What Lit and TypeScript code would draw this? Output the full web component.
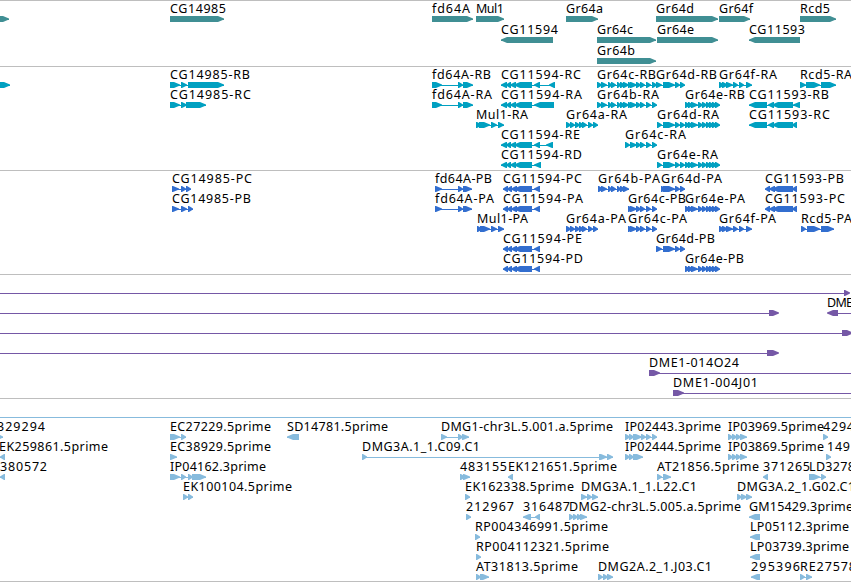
import { LitElement, html, css, svg } from 'lit'
import { customElement, property } from 'lit/decorators.js'

type Block = [number, number]

interface Feature {
	/** Label text, empty when it lies outside the view */
	name: string
	/** Left and right edge of the label */
	span: [number, number]
	blocks: Block[]
	reverse?: boolean
	/** Spliced line drawn past the first or last block */
	line?: [number, number]
}

interface Track {
	kind: string
	lanes: Feature[][]
}

const fwd = (name: string, from: number, to: number, ...blocks: Block[]): Feature => ({
	name,
	span: [from, to],
	blocks,
})

const rev = (name: string, from: number, to: number, ...blocks: Block[]): Feature => ({
	name,
	span: [from, to],
	blocks,
	reverse: true,
})

// Exons that several transcripts share
const fd64a: Block[] = [[432, 442], [458, 463], [463, 473]]
const fd64aCds: Block[] = [[435, 442], [458, 463], [463, 472]]
const cg11594: Block[] = [[501, 507], [506, 511], [510, 516], [514, 532]]
const cg11594Cds: Block[] = [[503, 508], [507, 512], [511, 517], [514, 532], [534, 540]]
const cg11593: Block[] = [[749, 767], [768, 774], [772, 793]]
const cg11593Cds: Block[] = [[765, 770], [769, 775], [772, 793], [792, 797]]
const gr64a: Block[] = [[566, 571], [570, 575], [575, 580], [579, 584], [582, 587], [588, 593], [593, 598]]
const gr64b: Block[] = [[597, 602], [601, 607], [608, 612], [611, 616], [617, 621], [620, 625], [623, 629]]
const gr64c: Block[] = [[628, 633], [630, 637], [636, 641], [640, 645], [646, 651], [652, 657]]
const gr64d: Block[] = [[656, 662], [663, 675], [675, 680], [680, 685]]
const gr64e: Block[] = [[685, 690], [688, 693], [691, 698], [698, 703], [702, 707], [706, 711], [709, 714], [712, 717], [715, 720]]
const gr64f: Block[] = [[719, 724], [722, 728], [726, 733], [733, 738], [739, 744], [746, 752]]

const TRACKS: Track[] = [
	{
		kind: 'gene',
		lanes: [
			[
				fwd('', 0, 0, [-10, 9]),
				fwd('CG14985', 170, 226, [170, 224]),
				fwd('fd64A', 432, 470, [432, 473]),
				fwd('Mul1', 476, 504, [476, 504]),
				fwd('Gr64a', 566, 603, [566, 598]),
				fwd('Gr64d', 656, 694, [656, 718]),
				fwd('Gr64f', 719, 753, [719, 750]),
				fwd('Rcd5', 800, 830, [800, 836]),
			],
			[
				rev('CG11594', 501, 558, [501, 553]),
				fwd('Gr64c', 597, 633, [597, 656]),
				fwd('Gr64e', 657, 694, [657, 718]),
				rev('CG11593', 749, 805, [749, 800]),
			],
			[fwd('Gr64b', 597, 635, [597, 656])],
		],
	},
	{
		kind: 'transcript',
		lanes: [
			[
				fwd('', 0, 0, [-10, 10]),
				fwd('CG14985-RB', 170, 250, [170, 180], [181, 187], [188, 224]),
				fwd('fd64A-RB', 432, 491, ...fd64a),
				rev('CG11594-RC', 501, 581, ...cg11594, [534, 540], [549, 555]),
				fwd('Gr64c-RB', 597, 656, ...gr64b, ...gr64c),
				fwd('Gr64d-RB', 656, 717, ...gr64d),
				fwd('Gr64f-RA', 719, 777, ...gr64f),
				fwd('Rcd5-RA', 800, 852, [800, 806], [806, 820], [821, 836]),
			],
			[
				fwd('CG14985-RC', 170, 251, [170, 180], [181, 187], [186, 206]),
				fwd('fd64A-RA', 432, 492, ...fd64a),
				rev('CG11594-RA', 501, 582, ...cg11594, [534, 554]),
				fwd('Gr64b-RA', 597, 659, ...gr64b, ...gr64c),
				fwd('Gr64e-RB', 685, 745, ...gr64e),
				rev('CG11593-RB', 749, 829, ...cg11593, [793, 800]),
			],
			[
				fwd('Mul1-RA', 476, 528, [476, 482], [479, 490], [491, 497], [498, 504]),
				fwd('Gr64a-RA', 566, 627, ...gr64a),
				fwd('Gr64d-RA', 657, 719, [657, 662], ...gr64d.slice(1), ...gr64e),
				rev('CG11593-RC', 749, 830, ...cg11593, [792, 797]),
			],
			[
				rev('CG11594-RE', 501, 580, ...cg11594, [534, 540], [546, 553]),
				fwd('Gr64c-RA', 625, 686, [625, 630], ...gr64c.slice(1)),
			],
			[
				rev('CG11594-RD', 501, 582, ...cg11594, [534, 541]),
				fwd('Gr64e-RA', 657, 718, [657, 662], ...gr64d.slice(1), ...gr64e),
			],
		],
	},
	{
		kind: 'protein',
		lanes: [
			[
				fwd('CG14985-PC', 172, 252, [172, 179], [181, 186], [186, 191]),
				fwd('fd64A-PB', 435, 492, ...fd64aCds),
				rev('CG11594-PC', 503, 582, ...cg11594Cds),
				fwd('Gr64b-PA', 598, 660, [598, 603], ...gr64b.slice(1)),
				fwd('Gr64d-PA', 661, 722, [661, 666], ...gr64d.slice(1)),
				rev('CG11593-PB', 765, 844, ...cg11593Cds),
			],
			[
				fwd('CG14985-PB', 172, 251, [172, 179], [181, 187], [188, 193]),
				fwd('fd64A-PA', 435, 494, ...fd64aCds),
				rev('CG11594-PA', 503, 583, ...cg11594Cds),
				fwd('Gr64c-PB', 628, 686, ...gr64c),
				fwd('Gr64e-PA', 685, 745, ...gr64e),
				rev('CG11593-PC', 765, 845, ...cg11593Cds),
			],
			[
				fwd('Mul1-PA', 477, 528, [477, 482], [480, 490], [491, 497], [498, 504]),
				fwd('Gr64a-PA', 566, 626, ...gr64a),
				fwd('Gr64c-PA', 628, 687, ...gr64c),
				fwd('Gr64f-PA', 719, 776, ...gr64f),
				fwd('Rcd5-PA', 801, 852, [801, 806], [807, 820], [821, 834]),
			],
			[
				rev('CG11594-PE', 503, 582, ...cg11594Cds),
				fwd('Gr64d-PB', 656, 715, ...gr64d),
			],
			[
				rev('CG11594-PD', 503, 583, ...cg11594Cds),
				fwd('Gr64e-PB', 685, 744, ...gr64e),
			],
		],
	},
	{
		kind: 'bac',
		lanes: [
			[{ ...fwd('', 0, 0, [844, 850]), line: [0, 845] }],
			[
				{ ...fwd('', 0, 0, [769, 779]), line: [0, 770] },
				{ ...rev('DME', 827, 853, [827, 838]), line: [838, 851] },
			],
			[{ ...fwd('', 0, 0, [842, 853]), line: [0, 843] }],
			[{ ...fwd('', 0, 0, [767, 779]), line: [0, 768] }],
			[{ ...fwd('DME1-014O24', 649, 739, [649, 660]), line: [658, 851] }],
			[{ ...fwd('DME1-004J01', 673, 758, [673, 684]), line: [682, 851] }],
		],
	},
	{ kind: 'empty', lanes: [] },
	{
		kind: 'est',
		lanes: [
			[
				fwd('329294', -3, 45, [-3, 3]),
				fwd('EC27229.5prime', 170, 271, [170, 180], [181, 186]),
				rev('SD14781.5prime', 287, 388, [287, 299]),
				fwd('DMG1-chr3L.5.001.a.5prime', 441, 613, [441, 447], [458, 463], [462, 469]),
				fwd('IP02443.3prime', 625, 721, [625, 630], [629, 634], [633, 642], [641, 646], [646, 651], [652, 657]),
				fwd('IP03969.5prime', 728, 824, [728, 733], [732, 737], [736, 741], [740, 747]),
				fwd('4294', 823, 854, [823, 828]),
			],
			[
				rev('EK259861.5prime', -1, 108, [0, 5]),
				fwd('EC38929.5prime', 170, 271, [170, 177]),
				fwd('DMG3A.1_1.C09.C1', 362, 480, [362, 367], [599, 607], [607, 613]),
				fwd('IP02444.5prime', 625, 721, [625, 630], [629, 634], [633, 643]),
				fwd('IP03869.5prime', 728, 824, [728, 733], [732, 737], [736, 741], [740, 747]),
				fwd('149', 827, 850, [826, 831]),
			],
			[
				rev('380572', 0, 47, [0, 5]),
				fwd('IP04162.3prime', 170, 266, [170, 180], [181, 186], [188, 193], [192, 206]),
				fwd('483155', 460, 507, [460, 465], [463, 470]),
				rev('EK121651.5prime', 508, 617, [508, 513]),
				fwd('AT21856.5prime', 657, 759, [657, 662], [663, 671]),
				rev('371265', 763, 810, [763, 768]),
				fwd('LD3278', 809, 855, [809, 820], [821, 826]),
			],
			[
				fwd('EK100104.5prime', 183, 292, [183, 188], [188, 193]),
				fwd('EK162338.5prime', 465, 574, [465, 470]),
				fwd('DMG3A.1_1.L22.C1', 581, 697, [581, 587], [587, 592], [592, 598]),
				fwd('DMG3A.2_1.G02.C1', 737, 855, [737, 742], [741, 747], [746, 752]),
			],
			[
				fwd('212967', 466, 514, [466, 471]),
				rev('316487', 523, 570, [523, 531], [535, 540]),
				fwd('DMG2-chr3L.5.005.a.5prime', 569, 741, [569, 574], [573, 578], [577, 582], [580, 587]),
				rev('GM15429.3prime', 749, 853, [749, 760]),
			],
			[
				fwd('RP004346991.5prime', 475, 608, [475, 480]),
				rev('LP05112.3prime', 750, 849, [750, 760]),
			],
			[
				fwd('RP004112321.5prime', 476, 609, [476, 481]),
				rev('LP03739.3prime', 750, 849, [750, 760]),
			],
			[
				fwd('AT31813.5prime', 476, 578, [476, 481], [480, 489]),
				fwd('DMG2A.2_1.J03.C1', 598, 712, [598, 603], [603, 608], [607, 613]),
				rev('295396', 751, 800, [751, 760]),
				fwd('RE27578', 800, 856, [800, 805], [806, 812]),
			],
		],
	},
]

/** One row of a track: labels above their strand-aware blocks */
@customElement('feature-lane')
class FeatureLane extends LitElement {
	@property({ attribute: false }) features: Feature[] = []

	static styles = css`
		:host {
			display: block;
		}

		svg {
			display: block;
			width: 100%;
			height: 100%;
			overflow: visible;
		}

		text {
			font: 12.5px 'Noto Sans', 'DejaVu Sans', sans-serif;
			fill: #000;
			white-space: pre;
		}

		.block,
		.line {
			fill: var(--feature-color);
		}

		.line {
			shape-rendering: crispEdges;
		}
	`

	private _block([a, b]: Block, reverse = false) {
		// short blocks keep a stub of full height before the tip
		const tip = Math.min(6, b - a - 1)
		const [tail, neck, head] = reverse ? [b, a + tip, a] : [a, b - tip, b]
		return svg`<path class="block" d="M${tail} 15H${neck}L${head} 17.5V18.5L${neck} 21H${tail}Z" />`
	}

	private _feature(f: Feature) {
		const [from, to] = f.line ?? [f.blocks[0][0], f.blocks[f.blocks.length - 1][1]]
		return svg`
			<rect class="line" x=${from} y="18" width=${to - from} height="1" />
			${f.blocks.map((b) => this._block(b, f.reverse))}
			${f.name
				? svg`<text x=${f.span[0]} y="12" textLength=${f.span[1] - f.span[0]}>${f.name}</text>`
				: ''}
		`
	}

	render() {
		return html`<svg>${this.features.map((f) => this._feature(f))}</svg>`
	}
}

@customElement('app-root')
class AppRoot extends LitElement {
	static styles = css`
		:host {
			display: flex;
			flex-direction: column;
			width: 851px;
			height: 582px;
			overflow: hidden;
			background: #fff;
		}

		.track {
			box-sizing: border-box;
			border-top: 1px solid #bebebe;
			padding-bottom: 3px;
		}

		feature-lane {
			height: 20px;
		}

		.gene {
			--feature-color: #408f94;
			padding-bottom: 2px;
		}

		.gene feature-lane {
			height: 21px;
		}

		.transcript {
			--feature-color: #00a0c1;
		}

		.protein {
			--feature-color: #326ecf;
		}

		.bac {
			--feature-color: #7558a6;
		}

		.empty {
			height: 19px;
			padding: 0;
		}

		.est {
			--feature-color: #87bbdd;
			border-top-color: #87bbdd;
			border-bottom: 1px solid #bebebe;
			padding: 1px 0 2px;
		}
	`

	render() {
		return TRACKS.map(
			(track) => html`
				<section class="track ${track.kind}">
					${track.lanes.map((lane) => html`<feature-lane .features=${lane}></feature-lane>`)}
				</section>
			`,
		)
	}
}
